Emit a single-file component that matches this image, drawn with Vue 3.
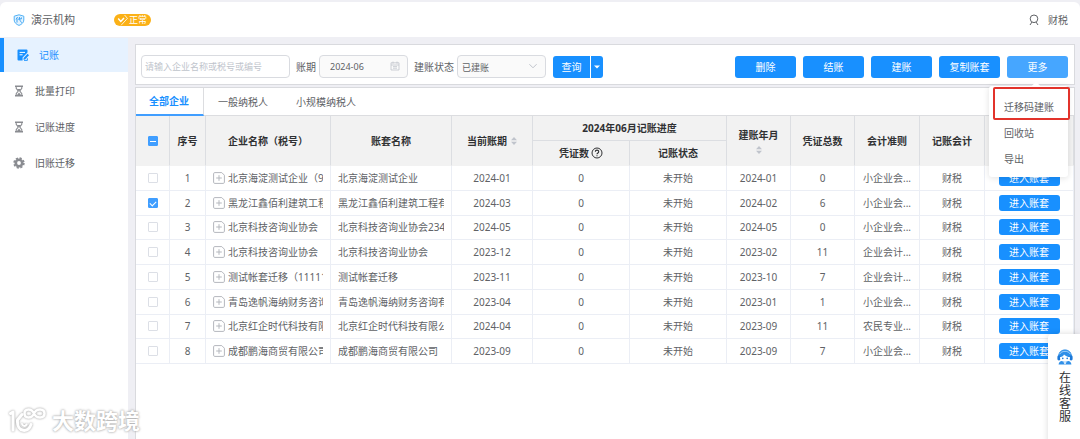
<template>
  <div class="app">
    <header class="header">
      <svg class="logo" viewBox="0 0 12 12">
        <path d="M6 0.8 L10.8 2.2 V6 C10.8 8.6 8.6 10.4 6 11.4 C3.4 10.4 1.2 8.6 1.2 6 V2.2 Z" fill="#e3f3ff" stroke="#4fb0f5" stroke-width="1" />
        <path d="M4.6 3 L3 5.4 M4 4.6 V8.6 M5 5.2 L9 4.6 M6.4 3 C6.5 5.6 7.2 7.6 8.8 8.6 M7.8 3 L8.6 3.7" fill="none" stroke="#2f9bf0" stroke-width="0.9" />
      </svg>
      <span class="org">演示机构</span>
      <span class="status">
        <svg class="status-icon" viewBox="0 0 14 12">
          <path d="M3.4 1 H10.6 L13.4 4.4 L7 11.4 L0.6 4.4 Z" fill="#fbb117" />
          <path d="M10.6 1 L13.4 4.4 L7 11.4" fill="none" stroke="#fff" stroke-width="0.8" />
          <path d="M4.2 4.6 L6.8 7.4 L10 4" fill="none" stroke="#fff" stroke-width="1.5" />
        </svg>
        正常
      </span>
      <span class="user">
        <svg class="user-icon" viewBox="0 0 12 12">
          <circle cx="6" cy="4.8" r="3.8" fill="none" stroke="#606266" stroke-width="1" />
          <path d="M4 8 L2 11 M8 8 L10 11" fill="none" stroke="#606266" stroke-width="1" />
        </svg>
        财税
      </span>
    </header>

    <div class="body">
      <nav class="sidebar">
        <a v-for="item in menus" :key="item.name" href="#" class="nav-item" :class="{ active: item.name === activeMenu }" @click.prevent="activeMenu = item.name">
          <svg v-if="item.icon === 'edit'" class="nav-icon" viewBox="0 0 12 12">
            <path d="M1.5 0.5 H9.5 Q10.5 0.5 10.5 1.5 V3.6 L5.6 8.6 V11.4 H1.5 Q0.5 11.4 0.5 10.4 V1.5 Q0.5 0.5 1.5 0.5 Z" fill="currentColor" />
            <path d="M2.6 3.4 H8 M2.6 5.8 H5.6" stroke="#fff" stroke-width="1" />
            <path d="M6.6 9 L10.6 4.8 L12 6.2 L8 10.4 L6.4 10.8 Z" fill="currentColor" />
            <path d="M9.4 8.6 L10.4 9.6 V11.4 H7" fill="none" stroke="currentColor" stroke-width="0.9" />
          </svg>
          <svg v-else-if="item.icon === 'glass'" class="nav-icon" viewBox="0 0 12 12">
            <path d="M2 1.2 H10 M2 10.8 H10" stroke="currentColor" stroke-width="1.4" />
            <path d="M3.2 1.5 V3.4 L5.2 6 L3.2 8.6 V10.5 M8.8 1.5 V3.4 L6.8 6 L8.8 8.6 V10.5" fill="none" stroke="currentColor" stroke-width="1.1" />
            <path d="M4 4 H8 L6 6.4 Z M4 10 L6 7.4 L8 10 Z" fill="currentColor" />
          </svg>
          <svg v-else class="nav-icon" viewBox="0 0 12 12">
            <circle cx="6" cy="6" r="3.2" fill="none" stroke="currentColor" stroke-width="2.6" />
            <circle cx="6" cy="6" r="4.9" fill="none" stroke="currentColor" stroke-width="1.6" stroke-dasharray="2.2 1.65" />
          </svg>
          <span>{{ item.name }}</span>
        </a>
      </nav>

      <main class="main">
        <section class="filter">
          <input v-model="keyword" class="field keyword" type="text" aria-label="企业" placeholder="请输入企业名称或税号或编号">
          <label class="label" for="period">账期</label>
          <div class="field-wrap">
            <input id="period" v-model="period" class="field period" type="text">
            <svg class="field-icon" viewBox="0 0 10 10">
              <path d="M1 1.8 H9 V9 H1 Z M1 4 H9 M3 0.6 V2.6 M7 0.6 V2.6 M3 5.6 H7 M3 7.2 H7" fill="none" stroke="#c0c4cc" stroke-width="0.8" />
            </svg>
          </div>
          <label class="label" for="state">建账状态</label>
          <div class="field-wrap">
            <select id="state" v-model="state" class="field state">
              <option>已建账</option>
            </select>
            <svg class="field-icon" viewBox="0 0 10 10">
              <path d="M1.4 3.2 L5 6.8 L8.6 3.2" fill="none" stroke="#c0c4cc" stroke-width="1" />
            </svg>
          </div>
          <div class="query">
            <button class="btn query-btn">查询</button>
            <button class="btn query-more" aria-label="查询">
              <svg viewBox="0 0 6 4"><path d="M0 0.4 H6 L3 3.6 Z" fill="#fff" /></svg>
            </button>
          </div>
          <div class="actions">
            <button v-for="name in actions" :key="name" class="btn action">{{ name }}</button>
            <div class="more">
              <button class="btn action more-btn" @click="showMore = !showMore">更多</button>
              <div v-if="showMore" class="dropdown">
                <button v-for="name in moreList" :key="name" class="dropdown-item">{{ name }}</button>
                <span class="mark"></span>
              </div>
            </div>
          </div>
        </section>

        <section class="content">
          <div class="tabs">
            <button v-for="tab in tabs" :key="tab" class="tab" :class="{ active: tab === activeTab }" @click="activeTab = tab">{{ tab }}</button>
          </div>
          <table class="table">
            <colgroup>
              <col class="w-check"><col class="w-no"><col class="w-name"><col class="w-book"><col class="w-now">
              <col class="w-half"><col class="w-half"><col class="w-date"><col class="w-date"><col class="w-rule"><col class="w-rule"><col>
            </colgroup>
            <thead>
              <tr>
                <th rowspan="2"><input class="check part" type="checkbox" aria-label="全部企业"></th>
                <th rowspan="2">序号</th>
                <th rowspan="2">企业名称（税号）</th>
                <th rowspan="2">账套名称</th>
                <th rowspan="2">
                  <span class="sort-title">当前账期
                    <svg class="sort" viewBox="0 0 6 8"><path d="M3 0 L6 3.2 H0 Z M3 8 L6 4.8 H0 Z" fill="#c0c4cc" /></svg>
                  </span>
                </th>
                <th colspan="2">2024年06月记账进度</th>
                <th rowspan="2">
                  <span class="sort-title stacked">建账年月
                    <svg class="sort" viewBox="0 0 6 8"><path d="M3 0 L6 3.2 H0 Z M3 8 L6 4.8 H0 Z" fill="#c0c4cc" /></svg>
                  </span>
                </th>
                <th rowspan="2">凭证总数</th>
                <th rowspan="2">会计准则</th>
                <th rowspan="2">记账会计</th>
                <th rowspan="2"></th>
              </tr>
              <tr>
                <th>
                  <span class="help-title">凭证数
                    <svg class="help" viewBox="0 0 12 12">
                      <circle cx="6" cy="6" r="5" fill="none" stroke="#303133" stroke-width="1" />
                      <path d="M4.3 4.8 C4.3 2.6 7.7 2.6 7.7 4.7 C7.7 6 6 5.9 6 7.3 M6 8.2 V9.3" fill="none" stroke="#303133" stroke-width="1.1" />
                    </svg>
                  </span>
                </th>
                <th>记账状态</th>
              </tr>
            </thead>
            <tbody>
              <tr v-for="(row, index) in rows" :key="index">
                <td><input v-model="row.checked" class="check" type="checkbox" :aria-label="row.book"></td>
                <td>{{ index + 1 }}</td>
                <td>
                  <div class="company">
                    <svg class="plus" viewBox="0 0 12 12">
                      <path d="M8.8 0.6 H1.8 Q0.6 0.6 0.6 1.8 V10.2 Q0.6 11.4 1.8 11.4 H10.2 Q11.4 11.4 11.4 10.2 V3.2 Z M6 3.2 V8.8 M3.2 6 H8.8" fill="none" stroke="#b4b7bd" stroke-width="1" />
                    </svg>
                    <span class="clip">{{ row.name }}</span>
                  </div>
                </td>
                <td><div class="clip book">{{ row.book }}</div></td>
                <td>{{ row.now }}</td>
                <td>0</td>
                <td>未开始</td>
                <td>{{ row.start }}</td>
                <td>{{ row.total }}</td>
                <td>{{ row.rule }}</td>
                <td>财税</td>
                <td><button class="btn enter">进入账套</button></td>
              </tr>
            </tbody>
          </table>
        </section>
      </main>
    </div>

    <a href="#" class="service">
      <svg class="service-icon" viewBox="0 0 16 16">
        <path d="M1.6 8 C1 -1.4 15 -1.4 14.4 8" fill="#2f8fe8" stroke="#2f8fe8" stroke-width="1" />
        <rect x="0.4" y="6.4" width="3" height="5" rx="1.4" fill="#1b78d8" />
        <rect x="12.6" y="6.4" width="3" height="5" rx="1.4" fill="#1b78d8" />
        <path d="M1.6 15.6 C1.8 12 5 11.4 8 11.4 C11 11.4 14.2 12 14.4 15.6 Z" fill="#2f8fe8" />
        <path d="M3 8.2 C5.4 7.8 6.4 6.6 7 5.4 C8.4 7 10.6 7.8 13 8.2 C12.8 14.4 3.2 14.4 3 8.2 Z" fill="#fff" />
        <path d="M2.6 5.2 C4.4 1.4 11.6 1.4 13.4 5.2" fill="none" stroke="#bfe0fb" stroke-width="0.8" />
        <circle cx="5.8" cy="9.4" r="0.8" fill="#1b78d8" />
        <circle cx="10.2" cy="9.4" r="0.8" fill="#1b78d8" />
        <path d="M6.4 13.2 L8 15.4 L9.6 13.2 Z" fill="#fff" />
      </svg>
      <span class="service-text">在线客服</span>
    </a>

    <div class="watermark">
      <svg class="watermark-logo" viewBox="0 0 40 28">
        <g fill="none" stroke="#fff" stroke-width="3" stroke-linecap="round" stroke-linejoin="round">
          <path d="M2.5 7.5 L5 6 V24" />
          <path d="M14 8.5 L9.5 14 C8.5 27 21 27 23 18.5" />
          <path d="M14 18 C15 20.5 17.5 20.5 18.5 18.5" stroke-width="2" />
          <path d="M26 7.5 C23.5 2 16.5 2.5 16.5 7.5 C16.5 12.5 23.5 13 26 7.5 C28.5 2 36.5 2.5 36.5 7.5 C36.5 12.5 28.5 13 26 7.5 Z" stroke-width="2.6" />
        </g>
      </svg>
      <span>大数跨境</span>
    </div>
  </div>
</template>

<script setup>
import { ref } from 'vue';

const menus = [
  { name: '记账', icon: 'edit' },
  { name: '批量打印', icon: 'glass' },
  { name: '记账进度', icon: 'glass' },
  { name: '旧账迁移', icon: 'gear' },
];
const activeMenu = ref('记账');

const keyword = ref('');
const period = ref('2024-06');
const state = ref('已建账');

const actions = ['删除', '结账', '建账', '复制账套'];
const moreList = ['迁移码建账', '回收站', '导出'];
const showMore = ref(true);

const tabs = ['全部企业', '一般纳税人', '小规模纳税人'];
const activeTab = ref('全部企业');

const rows = ref([
  { checked: false, name: '北京海淀测试企业（9', book: '北京海淀测试企业', now: '2024-01', start: '2024-01', total: 0, rule: '小企业会...' },
  { checked: true, name: '黑龙江鑫佰利建筑工程', book: '黑龙江鑫佰利建筑工程有', now: '2024-03', start: '2024-02', total: 6, rule: '小企业会...' },
  { checked: false, name: '北京科技咨询业协会', book: '北京科技咨询业协会234', now: '2024-05', start: '2024-05', total: 0, rule: '小企业会...' },
  { checked: false, name: '北京科技咨询业协会', book: '北京科技咨询业协会', now: '2023-12', start: '2023-02', total: 11, rule: '企业会计...' },
  { checked: false, name: '测试帐套迁移（11111', book: '测试帐套迁移', now: '2023-11', start: '2023-10', total: 7, rule: '企业会计...' },
  { checked: false, name: '青岛逸帆海纳财务咨询', book: '青岛逸帆海纳财务咨询有', now: '2023-04', start: '2023-01', total: 1, rule: '小企业会...' },
  { checked: false, name: '北京红企时代科技有限', book: '北京红企时代科技有限公', now: '2024-04', start: '2023-09', total: 11, rule: '农民专业...' },
  { checked: false, name: '成都鹏海商贸有限公司', book: '成都鹏海商贸有限公司', now: '2023-09', start: '2023-09', total: 7, rule: '小企业会...' },
]);
</script>

<style>
body {
  background-color: #efeff4;
}
</style>

<style scoped>
.app {
  position: relative;
  display: flex;
  flex-direction: column;
  min-height: 100vh;
  box-sizing: border-box;
  padding-top: 2px;
  overflow: hidden;
  font-family: "Noto Sans", "Noto Sans CJK SC", sans-serif;
  font-size: 10px;
  line-height: 14px;
  color: #606266;
}
.app * {
  box-sizing: border-box;
}
button, input, select {
  font: inherit;
  color: inherit;
  margin: 0;
}
a {
  color: inherit;
  text-decoration: none;
}
svg {
  display: block;
  flex: none;
}
.header {
  display: flex;
  align-items: center;
  height: 35px;
  padding: 0 12px 0 13px;
  background-color: #fff;
  border-radius: 6px 6px 0 0;
}
.logo {
  width: 12px;
  height: 12px;
}
.org {
  margin-left: 6px;
  font-size: 11px;
}
.status {
  display: flex;
  align-items: center;
  gap: 1px;
  height: 12px;
  margin-left: 39px;
  padding-right: 4px;
  border-radius: 6px;
  background-color: #fbb117;
  color: #fff;
  font-size: 9px;
}
.status-icon {
  width: 14px;
  height: 12px;
}
.user {
  display: flex;
  align-items: center;
  gap: 8px;
  margin-left: auto;
}
.user-icon {
  width: 12px;
  height: 12px;
}
.body {
  flex: 1;
  display: flex;
  padding-top: 1px;
}
.sidebar {
  display: flex;
  flex-direction: column;
  gap: 2px;
  width: 128px;
  background-color: #fff;
}
.nav-item {
  display: flex;
  align-items: center;
  gap: 10px;
  height: 34px;
  padding-left: 13px;
}
.nav-item.active {
  border-left: 4px solid #1890ff;
  background-color: #e6f2ff;
  color: #1890ff;
}
.nav-icon {
  width: 12px;
  height: 12px;
  color: #8a8c91;
}
.active .nav-icon {
  color: #1890ff;
}
.main {
  flex: 1;
  display: flex;
  flex-direction: column;
  gap: 2px;
  min-width: 0;
  padding: 6px 5px 0 7px;
}
.filter {
  display: flex;
  align-items: center;
  height: 41px;
  padding: 4px 6px 0 5px;
  border: 1px solid #d9dade;
  background-color: #fff;
}
.field {
  display: block;
  height: 23px;
  border: 1px solid #d9dbe0;
  border-radius: 4px;
  outline: none;
  background-color: #fff;
  font-size: 9px;
}
.field::placeholder {
  color: #c0c4cc;
}
.keyword {
  width: 149px;
  padding: 0 3px;
}
.label {
  margin: 0 3px 0 6px;
}
.field-wrap {
  position: relative;
}
.period {
  width: 89px;
  padding: 0 24px 0 10px;
  background-color: #fafafa;
}
.state {
  width: 89px;
  padding: 2px 20px 0 4px;
  appearance: none;
  background-color: #fafafa;
}
.field-icon {
  position: absolute;
  top: 6px;
  right: 8px;
  width: 10px;
  height: 10px;
  pointer-events: none;
}
.btn {
  height: 22px;
  padding: 0;
  border: none;
  border-radius: 3px;
  background-color: #1890ff;
  color: #fff;
  text-align: center;
  white-space: nowrap;
  cursor: pointer;
}
.query {
  display: flex;
  gap: 1px;
  margin-left: 7px;
}
.query-btn {
  width: 37px;
  border-radius: 3px 0 0 3px;
}
.query-more {
  display: flex;
  align-items: center;
  justify-content: center;
  width: 12px;
  border-radius: 0 3px 3px 0;
}
.query-more svg {
  width: 6px;
  height: 4px;
}
.actions {
  display: flex;
  gap: 7px;
  margin-left: auto;
}
.action {
  width: 61px;
}
.more {
  position: relative;
}
.more-btn {
  background-color: #46a6ff;
}
.dropdown {
  position: absolute;
  top: 30px;
  right: 0;
  z-index: 10;
  width: 79px;
  padding: 8px 0 5px;
  border-radius: 3px;
  background-color: #fff;
  box-shadow: 0 1px 6px rgba(0, 0, 0, 0.12);
}
.dropdown::before {
  content: "";
  position: absolute;
  top: -3px;
  left: 44px;
  width: 6px;
  height: 6px;
  background-color: #fff;
  transform: rotate(45deg);
}
.dropdown-item {
  display: block;
  width: 100%;
  height: 26px;
  padding: 0 0 0 15px;
  border: none;
  background: none;
  text-align: left;
  cursor: pointer;
}
.mark {
  position: absolute;
  top: 1px;
  left: 4px;
  right: -2px;
  height: 33px;
  border: 2px solid #e2332b;
  border-radius: 2px;
  pointer-events: none;
}
.content {
  flex: 1;
  border: 1px solid #d9dade;
  border-bottom: none;
  background-color: #fff;
}
.tabs {
  display: flex;
  height: 28px;
  border-bottom: 1px solid #dcdde0;
}
.tab {
  padding: 0 14px;
  border: none;
  background: none;
  cursor: pointer;
}
.tab.active {
  height: 28px;
  padding-left: 13px;
  border-right: 1px solid #dcdde0;
  border-bottom: 2px solid #409eff;
  color: #1890ff;
  font-weight: bold;
}
.table {
  width: 100%;
  height: 248px;
  table-layout: fixed;
  border-collapse: separate;
  border-spacing: 0;
  text-align: center;
}
.w-check {
  width: 34px;
}
.w-no {
  width: 36px;
}
.w-name {
  width: 125px;
}
.w-book {
  width: 121px;
}
.w-now {
  width: 81px;
}
.w-half {
  width: 97px;
}
.w-date {
  width: 64px;
}
.w-rule {
  width: 65px;
}
.table th {
  height: 25px;
  padding: 0;
  border-right: 1px solid #dcdee2;
  border-bottom: 1px solid #dcdee2;
  background-color: #f2f2f2;
  color: #303133;
  font-weight: bold;
}
.table th[rowspan], .table tr:last-child th {
  border-bottom-color: #f2f2f2;
}
.table td {
  height: 24px;
  padding: 0;
  border-right: 1px solid #ebeef5;
  border-bottom: 1px solid #ebeef5;
  white-space: nowrap;
}
.sort-title {
  display: inline-flex;
  align-items: center;
  gap: 4px;
}
.stacked {
  flex-direction: column;
}
.sort {
  width: 6px;
  height: 8px;
}
.help-title {
  display: inline-flex;
  align-items: center;
  gap: 2px;
}
.help {
  width: 12px;
  height: 12px;
}
.check {
  display: block;
  width: 10px;
  height: 10px;
  margin: 0 auto;
  appearance: none;
  border: 1px solid #dcdfe6;
  border-radius: 1px;
  background-color: #fff;
}
.check:checked, .check.part {
  border-color: #409eff;
  background-color: #409eff;
}
.check:checked::before {
  content: "";
  display: block;
  width: 5px;
  height: 3px;
  margin: 2px auto 0;
  border-left: 1px solid #fff;
  border-bottom: 1px solid #fff;
  transform: rotate(-45deg);
}
.check.part::before {
  content: "";
  display: block;
  width: 6px;
  height: 1px;
  margin: 4px auto 0;
  background-color: #fff;
}
.company {
  display: flex;
  align-items: center;
  gap: 3px;
  margin: 0 7px;
}
.plus {
  width: 12px;
  height: 12px;
}
.clip {
  overflow: hidden;
  text-align: left;
  white-space: nowrap;
}
.book {
  margin: 0 7px;
}
.enter {
  display: block;
  width: 61px;
  height: 16px;
  margin: 0 auto;
  line-height: 16px;
}
.service {
  position: absolute;
  top: 334px;
  right: 0;
  z-index: 20;
  display: flex;
  flex-direction: column;
  align-items: center;
  gap: 6px;
  width: 32px;
  height: 112px;
  padding: 15px 0 0 2px;
  border-radius: 4px 0 0 4px;
  background-color: #fff;
  box-shadow: 0 0 6px rgba(0, 0, 0, 0.15);
  color: #303133;
}
.service-icon {
  width: 16px;
  height: 16px;
}
.service-text {
  width: 12px;
  font-size: 12px;
  line-height: 13px;
}
.watermark {
  position: absolute;
  left: 8px;
  bottom: 5px;
  display: flex;
  align-items: center;
  gap: 4px;
  color: #fff;
  font-size: 22px;
  line-height: 28px;
  font-weight: bold;
  text-shadow: 0 0 2px #aaa, 0 0 3px #bbb;
}
.watermark-logo {
  width: 40px;
  height: 28px;
  filter: drop-shadow(0 0 1px #999);
}
</style>
